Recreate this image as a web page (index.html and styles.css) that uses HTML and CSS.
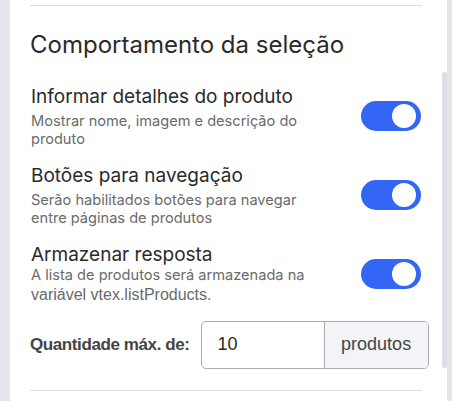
FILE: index.html
```html
<!DOCTYPE html>
<html lang="pt-BR">
<head>
<meta charset="utf-8">
<link rel="stylesheet" href="styles.css">
</head>
<body>
<div class="panel">
  <div class="divider"></div>
  <h2 class="title">Comportamento da seleção</h2>
  <div class="rows">
    <div class="row">
      <div class="text">
        <div class="label">Informar detalhes do produto</div>
        <div class="desc">Mostrar nome, imagem e descrição do produto</div>
      </div>
      <span class="toggle"><span class="knob"></span></span>
    </div>
    <div class="row">
      <div class="text">
        <div class="label">Botões para navegação</div>
        <div class="desc">Serão habilitados botões para navegar entre páginas de produtos</div>
      </div>
      <span class="toggle"><span class="knob"></span></span>
    </div>
    <div class="row">
      <div class="text">
        <div class="label">Armazenar resposta</div>
        <div class="desc desc-tight">A lista de produtos será armazenada na <span class="plain">variável vtex.listProducts.</span></div>
      </div>
      <span class="toggle"><span class="knob"></span></span>
    </div>
  </div>
  <div class="qty">
    <span class="qty-label">Quantidade máx. de:</span>
    <div class="group">
      <span class="value">10</span>
      <span class="addon">produtos</span>
    </div>
  </div>
  <div class="divider bottom"></div>
  <div class="scroll-thumb"></div>
</div>
</body>
</html>
```
FILE: styles.css
```css
html, body {
  margin: 0;
  padding: 0;
}
body {
  background: #e4e6ec;
  font-family: Inter, "Liberation Sans", sans-serif;
  color: #2a2a2a;
  height: 401px;
  overflow: hidden;
}
.panel {
  position: relative;
  margin-left: 10px;
  width: 437px;
  height: 401px;
  box-sizing: border-box;
  background: #fff;
  padding: 5px 25px 0 20px;
}
.divider {
  height: 1px;
  background: #dcdde3;
}
.title {
  margin: 0;
  padding: 24px 0 0 0;
  font-size: 24px;
  line-height: 30px;
  font-weight: 400;
  color: #2a2a2a;
}
.rows {
  display: flex;
  flex-direction: column;
  gap: 16px;
  margin-top: 25px;
}
.row {
  display: flex;
  align-items: flex-start;
  justify-content: space-between;
  padding-left: 1px;
}
.text {
  width: 285px;
}
.label {
  font-size: 19px;
  line-height: 24px;
  color: #2a2a2a;
}
.desc {
  font-size: 14.6px;
  line-height: 18px;
  color: #6a6a6a;
  margin-top: 3px;
}
.desc-tight {
  line-height: 20px;
  margin-top: -2.5px;
}
.plain {
  font-family: "Liberation Sans", Arial, sans-serif;
  font-size: 16px;
}
.toggle {
  position: relative;
  width: 60px;
  height: 30px;
  border-radius: 15px;
  background: #3466f6;
  margin-top: 16px;
  margin-right: 1px;
  flex: none;
}
.knob {
  position: absolute;
  top: 3px;
  right: 5px;
  width: 24px;
  height: 24px;
  border-radius: 50%;
  background: #fff;
}
.qty {
  display: flex;
  align-items: center;
  margin-top: 16px;
  gap: 11px;
}
.qty-label {
  flex: none;
  white-space: nowrap;
  font-family: "Liberation Sans", Arial, sans-serif;
  font-size: 17px;
  font-weight: 700;
  color: #444;
  letter-spacing: -0.4px;
}
.group {
  flex: none;
  display: flex;
  width: 228px;
  height: 48px;
  box-sizing: border-box;
  border: 1px solid #a9abb3;
  border-radius: 5px;
  overflow: hidden;
}
.value {
  flex: 1;
  display: flex;
  align-items: center;
  padding-left: 16px;
  font-family: "Liberation Sans", Arial, sans-serif;
  font-size: 18px;
  color: #2a2a2a;
}
.addon {
  width: 103px;
  display: flex;
  align-items: center;
  justify-content: center;
  border-left: 1px solid #a9abb3;
  background: #f3f4f8;
  font-family: "Liberation Sans", Arial, sans-serif;
  font-size: 18px;
  color: #444;
}
.bottom {
  margin-top: 21px;
}
.scroll-thumb {
  position: absolute;
  right: 0;
  top: 72px;
  width: 5px;
  height: 296px;
  border-radius: 3px;
  background: #dcdfe6;
}
```
